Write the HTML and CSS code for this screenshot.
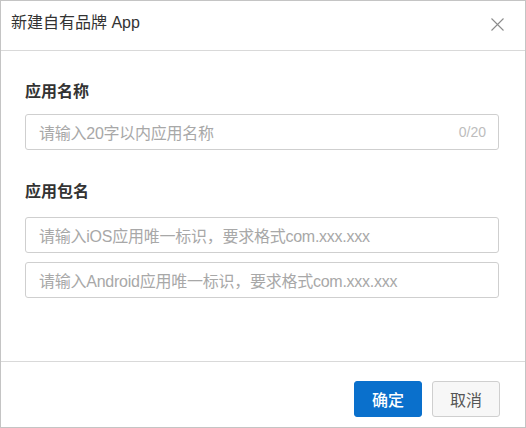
FILE: index.html
```html
<!DOCTYPE html>
<html lang="zh-CN">
<head>
<meta charset="utf-8">
<title>新建自有品牌 App</title>
<link rel="stylesheet" href="styles.css">
</head>
<body>
<div class="dialog">
  <div class="dialog-header">
    <span class="dialog-title">新建自有品牌 App</span>
    <button class="close-btn" aria-label="关闭">
      <svg width="13" height="13" viewBox="0 0 13 13"><path d="M0.5 0.5 L12.5 12.5 M12.5 0.5 L0.5 12.5" stroke="#8c8c8c" stroke-width="1.1" fill="none"/></svg>
    </button>
  </div>
  <div class="dialog-body">
    <div class="field field-name">
      <div class="field-label">应用名称</div>
      <div class="input-box">
        <span class="placeholder">请输入20字以内应用名称</span>
        <span class="counter">0/20</span>
      </div>
    </div>
    <div class="field field-pkg">
      <div class="field-label">应用包名</div>
      <div class="input-stack">
        <div class="input-box"><span class="placeholder">请输入iOS应用唯一标识，要求格式com.xxx.xxx</span></div>
        <div class="input-box"><span class="placeholder">请输入Android应用唯一标识，要求格式com.xxx.xxx</span></div>
      </div>
    </div>
  </div>
  <div class="dialog-footer">
    <button class="btn btn-primary">确定</button>
    <button class="btn btn-default">取消</button>
  </div>
</div>
</body>
</html>
```
FILE: styles.css
```css
html, body {
  margin: 0;
  padding: 0;
  background: #fff;
}
body {
  font-family: "Liberation Sans", "Noto Sans CJK SC", sans-serif;
  color: #333;
}
.dialog {
  width: 526px;
  height: 428px;
  box-sizing: border-box;
  border: 1px solid #c4c4c4;
  display: flex;
  flex-direction: column;
  background: #fff;
}
.dialog-header {
  height: 49px;
  flex-shrink: 0;
  border-bottom: 1px solid #d9d9d9;
  display: flex;
  align-items: center;
  justify-content: space-between;
  padding: 0 21px 0 10px;
}
.dialog-title {
  font-size: 16px;
  color: #333;
  line-height: 20px;
  margin-top: -6px;
}
.close-btn {
  border: 0;
  background: transparent;
  padding: 0;
  width: 13px;
  height: 13px;
  display: flex;
  margin-top: -3px;
}
.dialog-body {
  flex: 1;
  padding: 29px 26px 0 24px;
}
.field-label {
  font-size: 16px;
  font-weight: bold;
  line-height: 24px;
  color: #333;
}
.field-name .field-label { margin-bottom: 10px; }
.field-pkg { margin-top: 30px; }
.field-pkg .field-label { margin-bottom: 13px; }
.input-stack {
  display: flex;
  flex-direction: column;
  gap: 9px;
}
.input-box {
  height: 36px;
  box-sizing: border-box;
  border: 1px solid #cfcfcf;
  border-radius: 3px;
  display: flex;
  align-items: center;
  justify-content: space-between;
  padding: 0 12px 0 13px;
}
.placeholder {
  font-size: 16px;
  letter-spacing: -0.25px;
  color: #a8a8a8;
  white-space: nowrap;
}
.counter {
  font-size: 14px;
  color: #bdbdbd;
}
.dialog-footer {
  border-top: 1px solid #d9d9d9;
  height: 66px;
  flex-shrink: 0;
  box-sizing: border-box;
  display: flex;
  justify-content: flex-end;
  align-items: flex-start;
  gap: 10px;
  padding: 19px 25px 0 0;
}
.btn {
  width: 68px;
  height: 36px;
  border-radius: 3px;
  font-family: "Liberation Sans", "Noto Sans CJK SC", sans-serif;
  font-size: 16px;
  padding: 0;
  box-sizing: border-box;
}
.btn-primary {
  background: #0a70cc;
  border: 1px solid #0a70cc;
  color: #fff;
  font-weight: 500;
}
.btn-default {
  background: #f7f7f7;
  border: 1px solid #cfcfcf;
  color: #555;
}
```
